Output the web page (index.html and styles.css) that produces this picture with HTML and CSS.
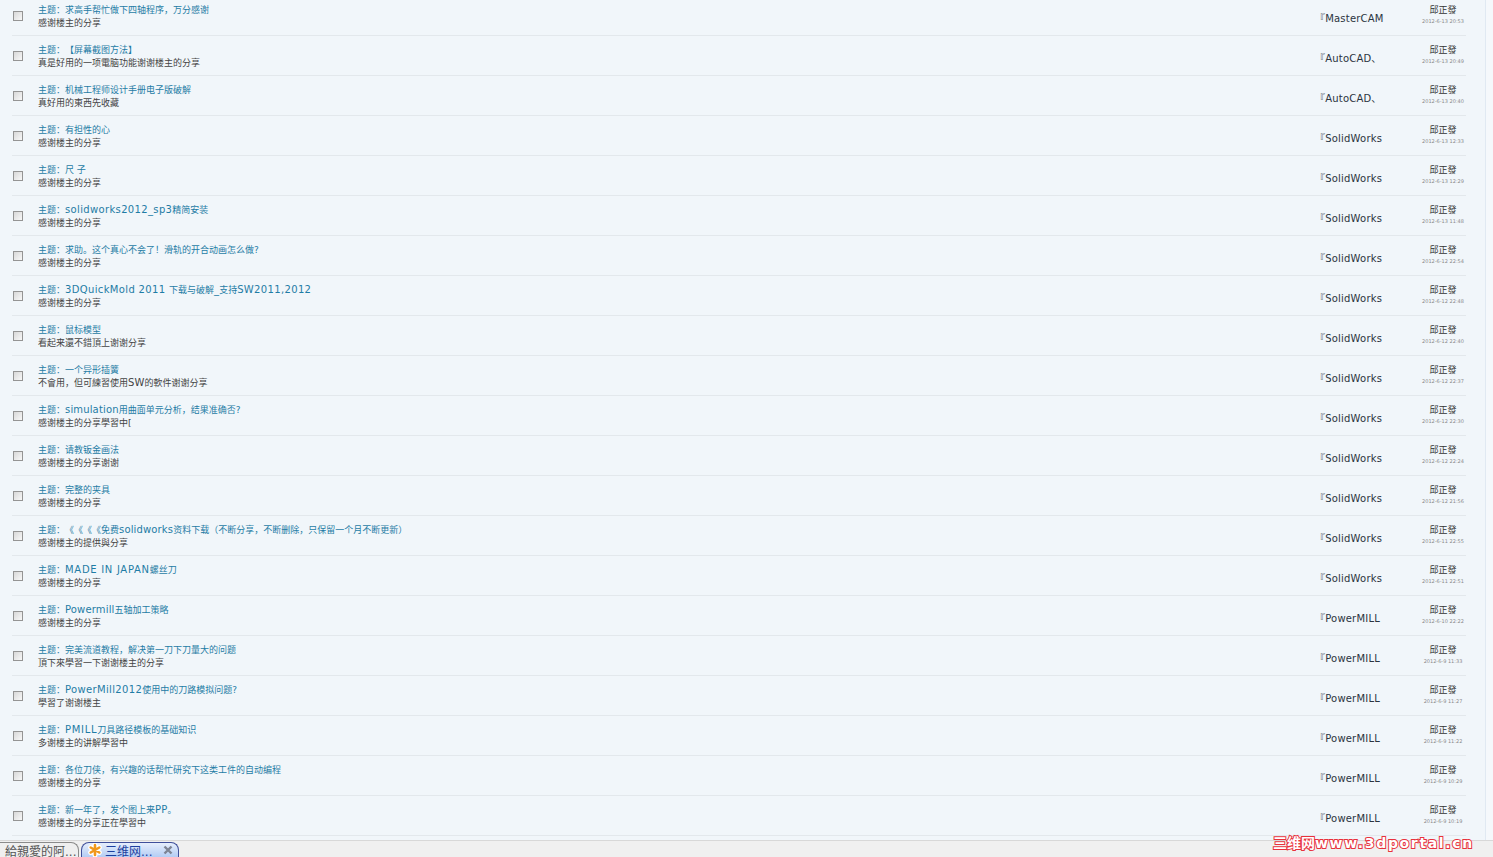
FILE: index.html
```html
<!DOCTYPE html>
<html lang="zh-CN">
<head>
    <meta charset="UTF-8">
    <title>三维网</title>
    <link rel="stylesheet" href="styles.css">
</head>
<body>
    <main class="page">
        <ul class="topics">
            <li class="topic"><span class="box"></span><div class="text"><a>主题：求高手帮忙做下四轴程序，万分感谢</a><p>感谢楼主的分享</p></div><span class="forum">『MasterCAM</span><div class="who"><b>邱正發</b><small>2012-6-13 20:53</small></div></li>
            <li class="topic"><span class="box"></span><div class="text"><a>主题：【屏幕截图方法】</a><p>真是好用的一项電脑功能谢谢楼主的分享</p></div><span class="forum">『AutoCAD、</span><div class="who"><b>邱正發</b><small>2012-6-13 20:49</small></div></li>
            <li class="topic"><span class="box"></span><div class="text"><a>主题：机械工程师设计手册电子版破解</a><p>真好用的東西先收藏</p></div><span class="forum">『AutoCAD、</span><div class="who"><b>邱正發</b><small>2012-6-13 20:40</small></div></li>
            <li class="topic"><span class="box"></span><div class="text"><a>主题：有担性的心</a><p>感谢楼主的分享</p></div><span class="forum">『SolidWorks</span><div class="who"><b>邱正發</b><small>2012-6-13 12:33</small></div></li>
            <li class="topic"><span class="box"></span><div class="text"><a>主题：尺 子</a><p>感谢楼主的分享</p></div><span class="forum">『SolidWorks</span><div class="who"><b>邱正發</b><small>2012-6-13 12:29</small></div></li>
            <li class="topic"><span class="box"></span><div class="text"><a>主题：<span class="en wide">solidworks2012_sp3</span>精简安装</a><p>感谢楼主的分享</p></div><span class="forum">『SolidWorks</span><div class="who"><b>邱正發</b><small>2012-6-13 11:48</small></div></li>
            <li class="topic"><span class="box"></span><div class="text"><a>主题：求助。这个真心不会了！滑轨的开合动画怎么做?</a><p>感谢楼主的分享</p></div><span class="forum">『SolidWorks</span><div class="who"><b>邱正發</b><small>2012-6-12 22:54</small></div></li>
            <li class="topic"><span class="box"></span><div class="text"><a>主题：<span class="en wide">3DQuickMold 2011 </span>下载与破解<span class="en">_</span>支持<span class="en wide">SW2011,2012</span></a><p>感谢楼主的分享</p></div><span class="forum">『SolidWorks</span><div class="who"><b>邱正發</b><small>2012-6-12 22:48</small></div></li>
            <li class="topic"><span class="box"></span><div class="text"><a>主题：鼠标模型</a><p>看起来還不錯頂上谢谢分享</p></div><span class="forum">『SolidWorks</span><div class="who"><b>邱正發</b><small>2012-6-12 22:40</small></div></li>
            <li class="topic"><span class="box"></span><div class="text"><a>主题：一个异形插簧</a><p>不會用，但可練習使用<span class="en">SW</span>的軟件谢谢分享</p></div><span class="forum">『SolidWorks</span><div class="who"><b>邱正發</b><small>2012-6-12 22:37</small></div></li>
            <li class="topic"><span class="box"></span><div class="text"><a>主题：<span class="en">simulation</span>用曲面单元分析，结果准确否?</a><p>感谢楼主的分享學習中[</p></div><span class="forum">『SolidWorks</span><div class="who"><b>邱正發</b><small>2012-6-12 22:30</small></div></li>
            <li class="topic"><span class="box"></span><div class="text"><a>主题：请教钣金画法</a><p>感谢楼主的分享谢谢</p></div><span class="forum">『SolidWorks</span><div class="who"><b>邱正發</b><small>2012-6-12 22:24</small></div></li>
            <li class="topic"><span class="box"></span><div class="text"><a>主题：完整的夹具</a><p>感谢楼主的分享</p></div><span class="forum">『SolidWorks</span><div class="who"><b>邱正發</b><small>2012-6-12 21:56</small></div></li>
            <li class="topic"><span class="box"></span><div class="text"><a>主题：《《《《免费<span class="en">solidworks</span>资料下载（不断分享，不断删除，只保留一个月不断更新）</a><p>感谢楼主的提供與分享</p></div><span class="forum">『SolidWorks</span><div class="who"><b>邱正發</b><small>2012-6-11 22:55</small></div></li>
            <li class="topic"><span class="box"></span><div class="text"><a>主题：<span class="en caps">MADE IN JAPAN</span>螺丝刀</a><p>感谢楼主的分享</p></div><span class="forum">『SolidWorks</span><div class="who"><b>邱正發</b><small>2012-6-11 22:51</small></div></li>
            <li class="topic"><span class="box"></span><div class="text"><a>主题：<span class="en">Powermill</span>五轴加工策略</a><p>感谢楼主的分享</p></div><span class="forum">『PowerMILL</span><div class="who"><b>邱正發</b><small>2012-6-10 22:22</small></div></li>
            <li class="topic"><span class="box"></span><div class="text"><a>主题：完美流道教程，解决第一刀下刀量大的问题</a><p>頂下來學習一下谢谢楼主的分享</p></div><span class="forum">『PowerMILL</span><div class="who"><b>邱正發</b><small>2012-6-9 11:33</small></div></li>
            <li class="topic"><span class="box"></span><div class="text"><a>主题：<span class="en wide">PowerMill2012</span>使用中的刀路模拟问题?</a><p>學習了谢谢楼主</p></div><span class="forum">『PowerMILL</span><div class="who"><b>邱正發</b><small>2012-6-9 11:27</small></div></li>
            <li class="topic"><span class="box"></span><div class="text"><a>主题：<span class="en caps">PMILL</span>刀具路径模板的基础知识</a><p>多谢楼主的讲解學習中</p></div><span class="forum">『PowerMILL</span><div class="who"><b>邱正發</b><small>2012-6-9 11:22</small></div></li>
            <li class="topic"><span class="box"></span><div class="text"><a>主题：各位刀侠，有兴趣的话帮忙研究下这类工件的自动编程</a><p>感谢楼主的分享</p></div><span class="forum">『PowerMILL</span><div class="who"><b>邱正發</b><small>2012-6-9 10:29</small></div></li>
            <li class="topic"><span class="box"></span><div class="text"><a>主题：新一年了，发个图上来<span class="en">PP</span>。</a><p>感谢楼主的分享正在學習中</p></div><span class="forum">『PowerMILL</span><div class="who"><b>邱正發</b><small>2012-6-9 10:19</small></div></li>
        </ul>
    </main>

    <footer class="tabbar">
        <div class="tab tab-off"><span class="tab-name">給親愛的阿...</span></div>
        <div class="tab tab-on">
            <svg class="star" viewBox="0 0 14 14" width="14" height="14">
                <path d="M7 2v10M2.7 4.5l8.6 5M11.3 4.5l-8.6 5" stroke="#fff" stroke-width="5" stroke-linecap="round"/>
                <path d="M7 2v10M2.7 4.5l8.6 5M11.3 4.5l-8.6 5" stroke="#f0981a" stroke-width="2.6" stroke-linecap="round"/>
            </svg>
            <span class="tab-name">三维网...</span>
            <svg class="tab-x" viewBox="0 0 10 10" width="10" height="10">
                <path d="M1.5 1.5l7 7M8.5 1.5l-7 7" stroke="#7d8494" stroke-width="2.4"/>
            </svg>
        </div>
    </footer>
    <div class="mark">三维网<span class="mark-url">www.3dportal.cn</span></div>
</body>
</html>
```

FILE: styles.css
```css
html, body {
    margin: 0;
    padding: 0;
    height: 857px;
    overflow: hidden;
}
body {
    position: relative;
    display: flex;
    flex-direction: column;
    background-color: #f5f8fb;
    font-family: "DejaVu Sans", Verdana, "Noto Sans CJK SC", sans-serif;
    text-spacing-trim: space-all;
}
.page {
    width: 1486px;
    height: 840px;
    box-sizing: border-box;
    overflow: hidden;
    background-color: #f1f6fa;
    border-right: 1px solid #e0e9f2;
}
.topics {
    list-style: none;
    margin: -4px 0 0 12px;
    padding: 0;
    width: 1454px;
}
.topic {
    display: flex;
    align-items: center;
    height: 39px;
    border-bottom: 1px solid #e3e8ec;
}
.box {
    width: 8px;
    height: 8px;
    margin: 0 15px 0 1px;
    border: 1px solid #949494;
    background: linear-gradient(135deg, #d8d8d8, #f8f8f8);
}
.text {
    flex: 1;
    margin-top: 2px;
    font-size: 9px;
    line-height: 13px;
}
.text a {
    display: block;
    height: 13px;
    color: #1f7ca5;
}
.text p {
    height: 13px;
    margin: 0;
    color: #444;
}
.en {
    font-size: 10px;
    line-height: 1;
    letter-spacing: 0.15px;
}
.wide {
    letter-spacing: 0.35px;
}
.caps {
    letter-spacing: 0.7px;
}
.forum {
    width: 105px;
    margin-top: 3px;
    font-size: 10px;
    letter-spacing: 0.2px;
    color: #2b3440;
    white-space: nowrap;
}
.who {
    width: 46px;
    margin-top: -2px;
    text-align: center;
}
.who b {
    display: block;
    font-weight: normal;
    font-size: 9px;
    line-height: 13px;
    color: #333;
}
.who small {
    display: block;
    font-size: 5px;
    line-height: 9px;
    color: #8a8a8a;
    white-space: nowrap;
}
.tabbar {
    display: flex;
    align-items: flex-end;
    gap: 2px;
    height: 16px;
    border-top: 1px solid #d8d8d8;
    background-color: #f0f0f0;
}
.tab {
    display: flex;
    align-items: center;
    height: 15px;
    box-sizing: border-box;
    border-radius: 8px 8px 0 0;
    font-size: 12px;
    white-space: nowrap;
    overflow: hidden;
}
.tab-off {
    width: 87px;
    margin-left: -8px;
    padding-left: 12px;
    border: 1px solid #8a8a8a;
    border-bottom: 0;
    color: #555;
    background-color: #efefef;
}
.tab-on {
    width: 98px;
    gap: 3px;
    padding-left: 6px;
    border: 1px solid #3f4f9a;
    border-bottom: 0;
    color: #1d3f9e;
    background: linear-gradient(#e6eefc, #b4cdf4);
}
.star {
    flex: none;
}
.tab-name {
    flex: 1;
}
.tab-x {
    flex: none;
    margin-right: 5px;
}
.mark {
    position: absolute;
    left: 1273px;
    bottom: 6px;
    font-family: "DejaVu Sans", "Noto Sans CJK SC", sans-serif;
    font-size: 14px;
    font-weight: bold;
    line-height: 16px;
    color: #fff;
    -webkit-text-stroke: 2px #e8323c;
    paint-order: stroke fill;
}
.mark-url {
    letter-spacing: 1.65px;
}
```
